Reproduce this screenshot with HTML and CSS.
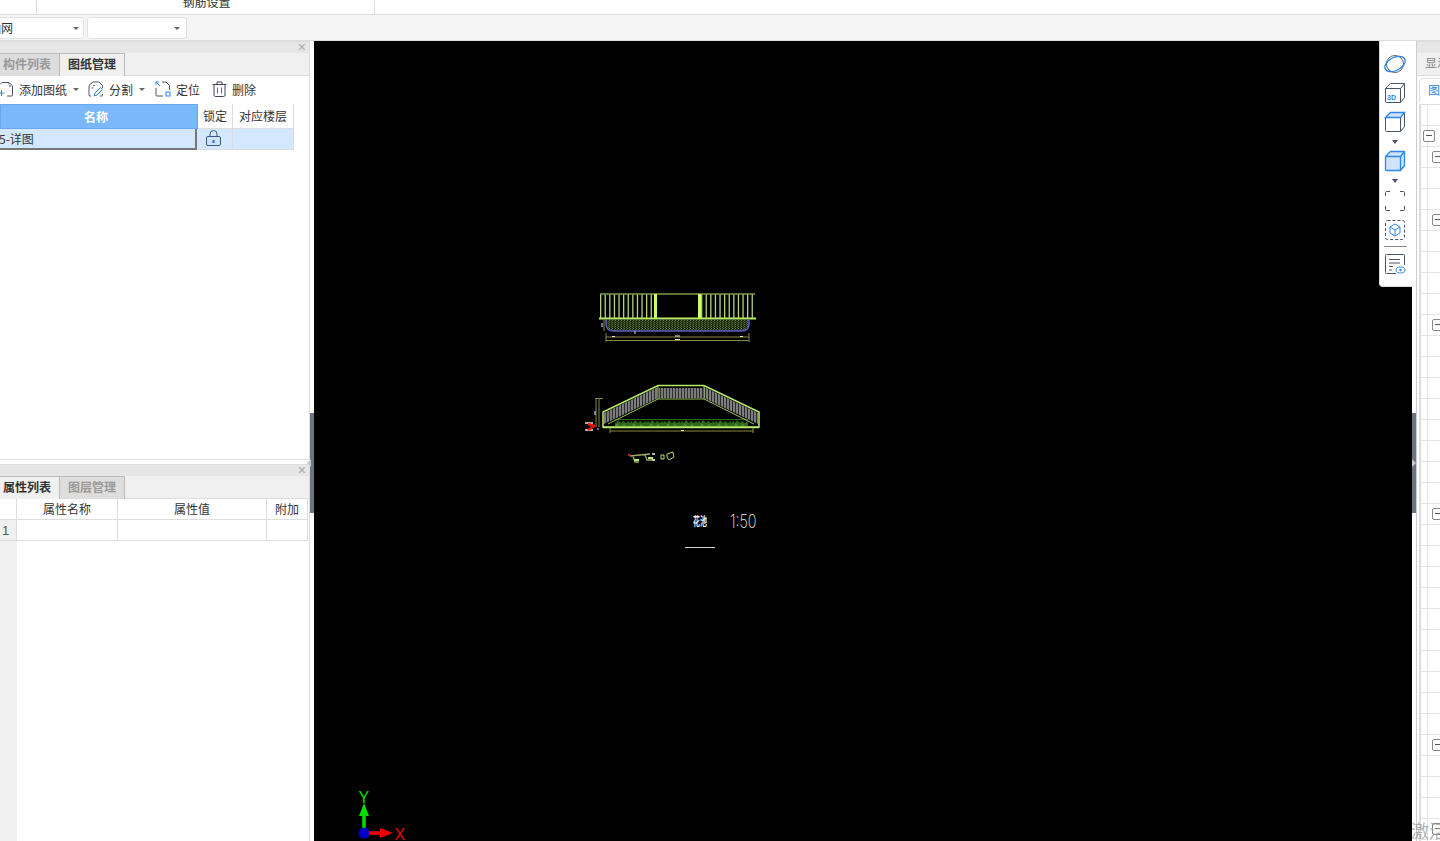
FILE: index.html
```html
<!DOCTYPE html>
<html lang="zh-CN">
<head>
    <meta charset="UTF-8">
    <title>钢筋设置</title>
    <link rel="stylesheet" href="styles.css">
</head>
<body>
    <div class="page">
        <div class="topbar">
            <div class="top-cell top-cell-a"></div>
            <div class="top-cell top-cell-b"><span>钢筋设置</span></div>
        </div>
        <div class="selectbar">
            <div class="select select-a"><span>轴网</span><i class="caret"></i></div>
            <div class="select select-b"><span></span><i class="caret"></i></div>
        </div>
        <div class="work">
            <div class="left">
                <div class="panel panel-top">
                    <div class="panel-head"><span class="close">×</span></div>
                    <div class="tabs">
                        <div class="tab tab-first">构件列表</div>
                        <div class="tab tab-on">图纸管理</div>
                    </div>
                    <div class="tools">
                        <div class="tool tool-add">
                            <svg width="16" height="16" viewBox="0 0 16 16" fill="none" stroke="#4a5468"><path d="M4 1.500h7l3.500 3.500v9a1 1 0 0 1-1 1H9M4 1.500l-2 2"/><path d="M11 1.500v3.500h3.500" stroke-dasharray="2 1.500"/><path d="M3.500 9v6M.5 12h6" stroke="#2f86ea"/></svg>
                            <span>添加图纸</span><i class="caret"></i>
                        </div>
                        <div class="tool tool-split">
                            <svg width="16" height="16" viewBox="0 0 16 16" fill="none" stroke="#4a5468"><path d="M5 1h6l3.500 3.500V7M3 15H2a1 1 0 0 1-1-1V4.500L5 1M14.500 13v1a1 1 0 0 1-1 1H12"/><path d="M5 4.500h2M3.500 7h2" stroke-width=".9"/><path d="M6 15l1-3 5.500-5.500 2 2L9 14z" stroke="#2f86ea"/></svg>
                            <span>分割</span><i class="caret"></i>
                        </div>
                        <div class="tool tool-locate">
                            <svg width="16" height="16" viewBox="0 0 16 16" fill="none" stroke="#4a5468"><path d="M7 1h4l3.500 3.500V9M1 7v7a1 1 0 0 0 1 1h6"/><path d="M1 1l4 4M1 1h3M1 1v3" stroke="#2f86ea"/><rect x="11" y="11" width="4" height="4" stroke="#2f86ea"/></svg>
                            <span>定位</span>
                        </div>
                        <div class="tool tool-del">
                            <svg width="15" height="16" viewBox="0 0 15 16" fill="none" stroke="#3c4458"><path d="M.5 3.500h14M5 3.500V1h5v2.500M2 3.500V14a1.500 1.500 0 0 0 1.500 1.500h8A1.500 1.500 0 0 0 13 14V3.500"/><path d="M5.500 6.500v6M9.500 6.500v6" stroke="#e03030"/></svg>
                            <span>删除</span>
                        </div>
                    </div>
                    <div class="sheet">
                        <div class="sheet-row sheet-head">
                            <div class="c-name">名称</div>
                            <div class="c-lock">锁定</div>
                            <div class="c-floor">对应楼层</div>
                        </div>
                        <div class="sheet-row sheet-sel">
                            <div class="c-name"><span>5-详图</span></div>
                            <div class="c-lock">
                                <svg width="15" height="16" viewBox="0 0 15 16" fill="#cfe3fa" stroke="#3c5a86"><path d="M4 7V4a3.500 3.500 0 0 1 7 0v3" fill="none"/><rect x=".5" y="6.500" width="14" height="9" rx="1.500"/><path d="M7.500 13v-3" stroke="#1f6fd8" stroke-width="2"/></svg>
                            </div>
                            <div class="c-floor"></div>
                        </div>
                    </div>
                </div>
                <div class="panel panel-bottom">
                    <div class="panel-head"><span class="close">×</span></div>
                    <div class="tabs">
                        <div class="tab tab-first tab-on">属性列表</div>
                        <div class="tab">图层管理</div>
                    </div>
                    <div class="props">
                        <div class="prop-gutter"><div class="gutter-head"></div><div class="gutter-num">1</div></div>
                        <div class="prop-grid">
                            <div class="prop-cell p-a prop-title">属性名称</div>
                            <div class="prop-cell p-b prop-title">属性值</div>
                            <div class="prop-cell p-c prop-title">附加</div>
                            <div class="prop-cell p-a"></div>
                            <div class="prop-cell p-b"></div>
                            <div class="prop-cell p-c"></div>
                        </div>
                    </div>
                </div>
            </div>
            <div class="handle"><div class="band"><i class="band-arrow band-arrow-left"></i></div></div>
            <div class="canvas">
                <svg class="drawing" width="1098" height="800" viewBox="314 41 1098 800" fill="none">
                    <defs>
                        <pattern id="rail" width="3" height="3" patternUnits="userSpaceOnUse">
                            <rect width="3" height="3" fill="#7c7c7c"/>
                            <rect width="1" height="3" fill="#2c2c2c"/>
                        </pattern>
                        <pattern id="soil" width="3" height="2" patternUnits="userSpaceOnUse">
                            <rect width="3" height="2" fill="#1c2a12"/>
                            <rect width="1" height="1" fill="#5c7a3a"/>
                            <rect x="2" y="1" width="1" height="1" fill="#46602c"/>
                        </pattern>
                        <pattern id="hedge" width="17" height="7" patternUnits="userSpaceOnUse">
                            <path d="M0 7V3l2-2 2 2 2-3 3 3 2-2 3 2 3-2v6z" fill="#2c6a18"/>
                            <path d="M3 6l2-3 2 3zM10 6l2-2 2 2z" fill="#4c8c2a"/>
                        </pattern>
                    </defs>

                    <!-- top view -->
                    <path d="M606 320v4q0 7 8 7h127q8 0 8-7v-4z" fill="url(#soil)"/>
                    <path d="M606 320v4q0 7 8 7h127q8 0 8-7v-4" stroke="#5a5ac8" stroke-width="1.500"/>
                    <path d="M600 306h54M701 306h54" stroke="#b0d47c" stroke-width="24" stroke-dasharray="1.300 3.300"/>
                    <path d="M600 294h155" stroke="#7c9a50" stroke-width="1.500"/>
                    <path d="M655.500 294v24M699.500 294v24" stroke="#c4ff70" stroke-width="3"/>
                    <path d="M599 318.500h157" stroke="#b8ec6c" stroke-width="2"/>
                    <path d="M606 337h143M606 340.500h143M606 333v9M749 333v9M604 320v11" stroke="#8a8a42"/>
                    <path d="M612 336.500h3M675 336h5M675 339.500h5M740 336.500h3M602 323v4M635 331v3" stroke="#e8e8e8"/>

                    <!-- elevation -->
                    <path d="M604 413l54-26v11l-54 26zM704 387l54 26v11l-54-26z" fill="url(#rail)"/>
                    <rect x="659" y="388" width="44" height="10" fill="url(#rail)"/>
                    <rect x="615" y="419" width="133" height="7" fill="url(#hedge)"/>
                    <path d="M603 427v-15l55-26.500h46l55 26.500v15z" stroke="#b8ec6c" stroke-width="1.500"/>
                    <path d="M658 386v13h46v-13M658 399l-50 25M704 399l50 25" stroke="#9cc85e"/>
                    <path d="M603 427.500h156" stroke="#b8ec6c" stroke-width="1.500"/>
                    <path d="M610 431h143M610 428v5M753 428v5M595 398.500h8M596 399v28M599 399v28" stroke="#8a8a42"/>
                    <path d="M585 423h8M585 430h8" stroke="#e8e8e8" stroke-width="1.500"/>
                    <path d="M588 424l6 2-6 4" stroke="#ee1111" stroke-width="2.500"/>
                    <path d="M595 411v4M681 430.500h3M598 428v2" stroke="#e8e8e8"/>

                    <!-- small details -->
                    <path d="M630 456l20-2M633 456l2 6h4M645 455l2 5h8" stroke="#a0a860" stroke-width="1.300"/>
                    <path d="M628 455h3" stroke="#dd3333" stroke-width="1.500"/>
                    <path d="M652 454h3M652 460h3" stroke="#e8e8e8" stroke-width="1.500"/>
                    <path d="M634 460h5M648 458h5" stroke="#b8ec6c" stroke-width="2"/>
                    <path d="M661 455h3v4h-3zM667 454l6-2 1 5-5 3-2-3z" stroke="#b8d878"/>

                    <!-- title -->
                    <text class="draw-title" transform="translate(693 526) scale(.58 1)">花池</text>
                    <text class="draw-scale" transform="translate(730 528) scale(.76 1)">1:50</text>
                    <path d="M685 547.500h30" stroke="#d0d0d0"/>

                    <!-- axes -->
                    <path d="M364 830v-16" stroke="#00e000" stroke-width="3.500"/>
                    <path d="M359 816l5-13 5 13z" fill="#00e000"/>
                    <path d="M366 833h16" stroke="#ee0000" stroke-width="3.500"/>
                    <path d="M380 828l13 5-13 5z" fill="#ee0000"/>
                    <circle cx="364" cy="833" r="5.500" fill="#0000c8"/>
                    <text class="axis-y" x="358.500" y="803">Y</text>
                    <text class="axis-x" x="394.500" y="840">X</text>
                </svg>
                <div class="viewbar">
                    <div class="view-btn">
                        <svg width="24" height="22" viewBox="0 0 24 22" fill="none"><ellipse cx="12" cy="11" rx="8.500" ry="8.500" stroke="#5a6070"/><ellipse cx="12" cy="11" rx="11" ry="6.500" transform="rotate(-28 12 11)" stroke="#2f86ea" stroke-width="1.300"/></svg>
                    </div>
                    <div class="view-btn">
                        <svg width="22" height="22" viewBox="0 0 22 22" fill="none" stroke="#4a5468"><path d="M1.500 6.500h15v14h-14a1 1 0 0 1-1-1zM1.500 6.500l5-5h14v14l-4 5M16.500 6.500l4-5"/><text class="cube-label" x="3" y="18">3D</text></svg>
                    </div>
                    <div class="view-btn">
                        <svg width="22" height="22" viewBox="0 0 22 22" fill="none" stroke="#4a5468"><path d="M1.500 6.500v13a1 1 0 0 0 1 1h14v-14M16.500 20.500l4-5v-14"/><path d="M1.500 6.500l5-5h14l-4 5z" fill="#cfe3fa" stroke="#2f86ea" stroke-width="1.300"/></svg>
                    </div>
                    <i class="down down-a"></i>
                    <div class="view-btn view-btn-b">
                        <svg width="22" height="22" viewBox="0 0 22 22" fill="#cfe3fa" stroke="#2f86ea" stroke-width="1.300"><path d="M1.500 6.500l5-5h14v14l-4 5h-14a1 1 0 0 1-1-1z"/><path d="M1.500 6.500h15v14M16.500 6.500l4-5"/></svg>
                    </div>
                    <i class="down down-b"></i>
                    <div class="view-btn">
                        <svg width="22" height="22" viewBox="0 0 22 22" fill="none" stroke="#4a5468"><path d="M1.500 6V2.500a1 1 0 0 1 1-1H6M16 1.500h3.500a1 1 0 0 1 1 1V6M20.500 16v3.500a1 1 0 0 1-1 1H16M6 20.500H2.500a1 1 0 0 1-1-1V16"/></svg>
                    </div>
                    <div class="view-btn">
                        <svg width="22" height="22" viewBox="0 0 22 22" fill="none"><rect x="1.500" y="1.500" width="19" height="19" rx="2" stroke="#4a5468" stroke-dasharray="3 2"/><path d="M11 5l5 3v6l-5 3-5-3V8zM6 8l5 3 5-3M11 11v6" stroke="#2f86ea"/></svg>
                    </div>
                    <div class="view-sep"></div>
                    <div class="view-btn">
                        <svg width="22" height="22" viewBox="0 0 22 22" fill="none" stroke="#4a5468"><path d="M12 20.500H2.500a1 1 0 0 1-1-1v-17a1 1 0 0 1 1-1h17a1 1 0 0 1 1 1V12"/><path d="M5 6.500h11M5 10h11M5 13.500h4M5 17h3"/><ellipse cx="16.500" cy="17" rx="4.500" ry="3" stroke="#2f86ea"/><circle cx="16.500" cy="17" r="1.200" fill="#2f86ea" stroke="none"/></svg>
                    </div>
                </div>
            </div>
            <div class="handle handle-right"><div class="band"><i class="band-arrow band-arrow-right"></i></div></div>
            <div class="right">
                <div class="panel-head"></div>
                <div class="tabs right-tabs"><span>显示设置</span></div>
                <div class="right-page">
                    <div class="right-tab">图纸</div>
                </div>
                <div class="tree">
                    <div class="tree-row"></div>
                    <div class="tree-row"><i class="box"></i></div>
                    <div class="tree-row"><i class="box box-sub"></i></div>
                    <div class="tree-row"></div>
                    <div class="tree-row"></div>
                    <div class="tree-row"><i class="box box-sub"></i></div>
                    <div class="tree-row"></div>
                    <div class="tree-row"></div>
                    <div class="tree-row"></div>
                    <div class="tree-row"></div>
                    <div class="tree-row"><i class="box box-sub"></i></div>
                    <div class="tree-row"></div>
                    <div class="tree-row"></div>
                    <div class="tree-row"></div>
                    <div class="tree-row"></div>
                    <div class="tree-row"></div>
                    <div class="tree-row"></div>
                    <div class="tree-row"></div>
                    <div class="tree-row"></div>
                    <div class="tree-row"><i class="box box-sub"></i></div>
                    <div class="tree-row"></div>
                    <div class="tree-row"></div>
                    <div class="tree-row"></div>
                    <div class="tree-row"></div>
                    <div class="tree-row"></div>
                    <div class="tree-row"></div>
                    <div class="tree-row"></div>
                    <div class="tree-row"></div>
                    <div class="tree-row"></div>
                    <div class="tree-row"></div>
                    <div class="tree-row"><i class="box box-sub"></i></div>
                    <div class="tree-row"></div>
                    <div class="tree-row"></div>
                    <div class="tree-row"></div>
                    <div class="tree-row"><i class="box box-sub"></i></div>
                    <div class="tree-row"></div>
                </div>
            </div>
        </div>
        <div class="watermark">激活 Windows</div>
    </div>
</body>
</html>
```

FILE: styles.css
```css
* {
    box-sizing: border-box;
}
body {
    margin: 0;
    background: #fff;
    font-family: "Noto Sans CJK SC", "Liberation Sans", sans-serif;
    font-size: 12px;
    color: #333;
    overflow: hidden;
}
.page {
    position: relative;
    width: 1440px;
    height: 841px;
    overflow: hidden;
    display: flex;
    flex-direction: column;
}

/* top rows */
.topbar {
    height: 15px;
    flex: none;
    display: flex;
    background: #fff;
    border-bottom: 1px solid #ddd;
    overflow: hidden;
}
.top-cell {
    height: 14px;
    border-right: 1px solid #ddd;
}
.top-cell-a {
    width: 37px;
}
.top-cell-b {
    width: 338px;
    text-align: center;
    line-height: 14px;
    overflow: hidden;
}
.top-cell-b span {
    display: block;
    margin-top: -5px;
    padding-left: 2px;
}
.selectbar {
    height: 26px;
    flex: none;
    display: flex;
    gap: 3px;
    padding-top: 2px;
    background: #f5f5f5;
    border-bottom: 1px solid #ddd;
}
.select {
    height: 22px;
    display: flex;
    align-items: center;
    justify-content: space-between;
    padding-right: 6px;
    background: #fff;
    border: 1px solid #e2e2e2;
    border-radius: 3px;
    line-height: 18px;
}
.select-a {
    width: 90px;
    margin-left: -6px;
    padding-right: 4px;
}
.select-a span {
    margin-left: -6px;
}
.select-b {
    width: 100px;
}
.caret {
    width: 0;
    height: 0;
    flex: none;
    border: 3px solid transparent;
    border-top: 3px solid #666;
    border-bottom: 0;
}

/* main area */
.work {
    flex: 1;
    display: flex;
    min-height: 0;
}
.left {
    width: 310px;
    flex: none;
    display: flex;
    flex-direction: column;
    border-right: 1px solid #ddd;
}
.panel {
    display: flex;
    flex-direction: column;
}
.panel-top {
    height: 419px;
    border-bottom: 1px solid #ddd;
}
.panel-bottom {
    flex: 1;
    margin-top: 4px;
    min-height: 0;
}
.panel-head {
    height: 12px;
    flex: none;
    background: #e6e6e6;
    border-top: 1px solid #ddd;
    text-align: right;
    padding-right: 3px;
}
.close {
    display: block;
    color: #aaa;
    font-family: "Liberation Sans", sans-serif;
    font-size: 14px;
    line-height: 11px;
}
.tabs {
    height: 23px;
    flex: none;
    display: flex;
    background: #f0f0f0;
    border-bottom: 1px solid #ddd;
}
.tab {
    width: 65px;
    height: 23px;
    padding: 0 8px;
    line-height: 20px;
    font-weight: 700;
    color: #999;
    background: #ddd;
    border: 1px solid #bbb;
    border-bottom: 0;
    border-left: 0;
}
.tab-first {
    width: 60px;
    padding: 0 0 0 3px;
    border-left: 0;
}
.tab-on {
    background: #f0f0f0;
    color: #333;
}

/* drawing list */
.tools {
    height: 28px;
    flex: none;
    display: flex;
    align-items: center;
    padding-bottom: 2px;
    background: #fff;
    margin-left: -2px;
}
.tool {
    display: flex;
    align-items: center;
    white-space: nowrap;
}
.tool svg {
    flex: none;
    margin-right: 5px;
}
.tool .caret {
    margin-left: 6px;
}
.tool-split {
    margin-left: 9px;
}
.tool-locate {
    margin-left: 10px;
}
.tool-del {
    margin-left: 12px;
}
.sheet {
    flex: 1;
    background: #fff;
}
.sheet-row {
    display: flex;
    text-align: center;
}
.c-name {
    width: 198px;
}
.c-lock {
    width: 35px;
    border-right: 1px solid #ddd;
}
.c-floor {
    width: 61px;
    border-right: 1px solid #ddd;
}
.sheet-head {
    height: 25px;
    line-height: 23px;
}
.sheet-head .c-name {
    background: #7ab8fb;
    border: 1px solid #68a8ee;
    color: #fff;
    font-weight: 700;
    padding-right: 6px;
}
.sheet-head .c-lock,
.sheet-head .c-floor {
    border-bottom: 1px solid #ddd;
    border-top: 0;
}
.sheet-sel {
    height: 21px;
    line-height: 20px;
    background: #d3e8ff;
    width: 294px;
    border-bottom: 1px solid #ddd;
}
.sheet-sel .c-name {
    width: 197px;
    margin-right: 1px;
    text-align: left;
    border-right: 2px solid #777;
    border-bottom: 2px solid #777;
    height: 21px;
    overflow: hidden;
}
.sheet-sel .c-name span {
    margin-left: -1px;
}
.sheet-sel .c-lock {
    display: flex;
    align-items: center;
    justify-content: center;
    padding-right: 3px;
    padding-bottom: 2px;
}

/* property list */
.props {
    flex: 1;
    display: flex;
    background: #fff;
    min-height: 0;
}
.prop-gutter {
    width: 17px;
    flex: none;
    background: #f0f0f0;
}
.gutter-head {
    height: 21px;
    background: #fff;
    border-bottom: 1px solid #ddd;
    border-right: 1px solid #ddd;
}
.gutter-num {
    height: 21px;
    line-height: 22px;
    padding-left: 2px;
    color: #555;
    border-bottom: 1px solid #ddd;
    border-right: 1px solid #ddd;
    font-family: "Liberation Sans", sans-serif;
    font-size: 13px;
}
.prop-grid {
    display: grid;
    grid-template-columns: 101px 149px 41px;
    grid-auto-rows: 21px;
    text-align: center;
    line-height: 20px;
}
.prop-cell {
    border-right: 1px solid #ddd;
    border-bottom: 1px solid #ddd;
}

/* handles either side of the canvas */
.handle {
    width: 4px;
    flex: none;
    padding-top: 372px;
    background: #fff;
}
.band {
    position: relative;
    height: 100px;
    background: #6b7480;
}
.band-arrow {
    position: absolute;
    top: 46px;
    width: 0;
    height: 0;
    border: 4px solid transparent;
}
.band-arrow-left {
    left: -3px;
    border-right-color: #c4c8ce;
    border-left: 0;
}
.band-arrow-right {
    left: 0;
    border-left-color: #c4c8ce;
    border-right: 0;
}

/* canvas */
.canvas {
    position: relative;
    flex: 1;
    min-width: 0;
    background: #000;
    overflow: hidden;
}
.drawing {
    position: absolute;
    top: 0;
    left: 0;
}
.draw-title {
    fill: #f0f0f0;
    font-size: 12px;
    font-weight: 700;
    font-family: "Noto Sans CJK SC", sans-serif;
}
.draw-scale {
    fill: #eee;
    font-size: 19px;
    font-weight: 200;
    font-family: Inter, "Liberation Sans", sans-serif;
}
.axis-y,
.axis-x {
    font-family: "Liberation Sans", sans-serif;
    font-size: 16px;
}
.axis-y {
    fill: #00e000;
}
.axis-x {
    fill: #ee0000;
}
.viewbar {
    position: absolute;
    top: 0;
    right: 0;
    width: 33px;
    height: 246px;
    padding: 8px 2px 0 0;
    display: flex;
    flex-direction: column;
    align-items: center;
    background: #fff;
    border: 1px solid #ddd;
    border-top: 0;
    border-right: 0;
    border-radius: 0 0 0 4px;
}
.view-btn {
    height: 29px;
    flex: none;
    display: flex;
    align-items: center;
    justify-content: center;
}
.view-btn-b {
    height: 28px;
}
.cube-label {
    fill: #2f86ea;
    stroke: none;
    font-family: "Liberation Sans", sans-serif;
    font-size: 7px;
    font-weight: 700;
}
.down {
    width: 0;
    height: 0;
    flex: none;
    border: 3px solid transparent;
    border-top: 4px solid #4a5468;
    border-bottom: 0;
    margin: 4px 0 3px;
}
.view-sep {
    width: 23px;
    height: 1px;
    flex: none;
    margin: 2px 0;
    background: #888;
}

/* right panel */
.right {
    width: 24px;
    flex: none;
    display: flex;
    flex-direction: column;
    border-left: 1px solid #c8ccd4;
    overflow: hidden;
}
.right-tabs {
    padding-left: 8px;
    line-height: 20px;
    color: #888;
    white-space: nowrap;
}
.right-page {
    height: 28px;
    flex: none;
    padding: 2px 0 0 2px;
    background: #fff;
}
.right-tab {
    width: 40px;
    height: 24px;
    padding-left: 8px;
    line-height: 22px;
    color: #2f86ea;
    white-space: nowrap;
    border: 1px solid #ddd;
    border-bottom: 0;
    border-radius: 5px 0 0 0;
}
.tree {
    flex: 1;
    min-height: 0;
    margin-left: 2px;
    border-left: 2px solid #ddd;
    border-top: 1px solid #ddd;
}
.tree-row {
    position: relative;
    height: 21px;
    background: linear-gradient(#e4e4e4, #e4e4e4) 6px 0 / 1px 100% no-repeat;
    border-bottom: 1px solid #e4e4e4;
}
.box {
    position: absolute;
    top: 4px;
    left: 2px;
    width: 12px;
    height: 12px;
    background: #fff;
    border: 1px solid #888;
    border-radius: 2px;
}
.box::after {
    content: "";
    position: absolute;
    top: 4px;
    left: 2px;
    width: 6px;
    height: 1px;
    background: #555;
}
.box-sub {
    left: 11px;
}
.watermark {
    position: absolute;
    top: 817px;
    left: 1411px;
    font-size: 18px;
    line-height: 26px;
    white-space: nowrap;
    color: rgba(150, 150, 150, 0.75);
}
```
